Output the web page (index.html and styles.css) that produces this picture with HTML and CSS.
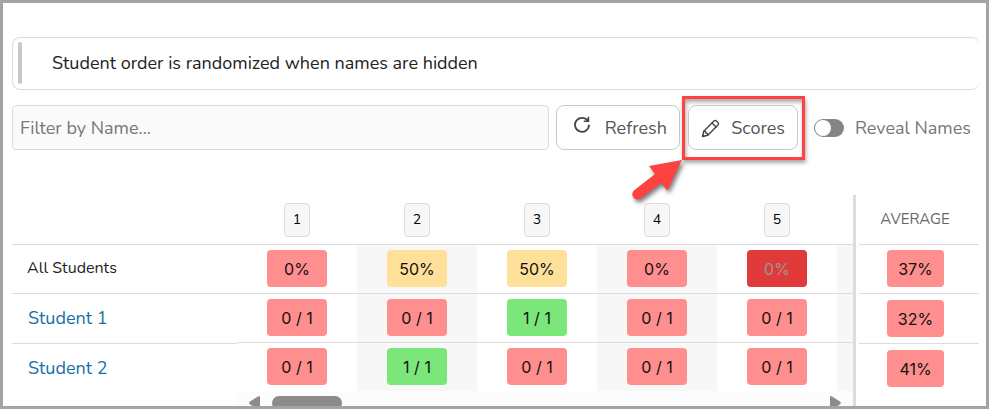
FILE: index.html
```html
<!DOCTYPE html>
<html lang="en">
<head>
<meta charset="utf-8">
<meta name="viewport" content="width=device-width, initial-scale=1">
<title>Student Scores</title>
<link rel="stylesheet" href="styles.css">
</head>
<body>
<main class="frame">
  <p class="notice">Student order is randomized when names are hidden</p>
  <div class="toolbar">
    <input class="filter" type="text" aria-label="Filter by Name" placeholder="Filter by Name...">
    <button class="btn refresh" type="button">
      <svg class="icon lifted" viewBox="0 0 20 20" width="20" height="20" aria-hidden="true"><path d="M15.6 5.6A7 7 0 1 0 17 9.800" fill="none" stroke="#444" stroke-width="1.800"/><path d="M17.200 1.800v5.200h-5.400V5.400h3.200l.8-3.600z" fill="#444"/></svg>
      Refresh
    </button>
    <div class="highlight">
      <button class="btn scores" type="button">
        <svg class="icon" viewBox="0 0 20 20" width="20" height="20" aria-hidden="true"><g fill="none" stroke="#444" stroke-width="1.400" stroke-linejoin="round" stroke-linecap="round"><path d="M1.500 18.500l1.300-5.300L12.900 3a1.900 1.900 0 0 1 2.600 0l1.500 1.500a1.900 1.900 0 0 1 0 2.600L6.800 17.200z"/><path d="M11 4.900l4.100 4.100M2.800 13.200l1.800.4.400 1.500 1.500.4.300 1.700M1.800 17.100l1.100 1.100"/></g></svg>
        Scores
      </button>
      <svg class="pointer" viewBox="0 0 60 50" width="60" height="50" aria-hidden="true"><path d="M52 5L19 11L25 19L4.500 35A4.900 4.900 0 0 0 10.500 43.500L31 28L37.500 35.500Z" fill="#fd4242"/></svg>
    </div>
    <label class="reveal"><input class="switch" type="checkbox">Reveal Names</label>
  </div>
  <section class="board">
    <table class="names">
      <thead><tr><th aria-label="Student"></th></tr></thead>
      <tbody>
        <tr><td class="all">All Students</td></tr>
        <tr><td><a href="#s1">Student 1</a></td></tr>
        <tr><td><a href="#s2">Student 2</a></td></tr>
      </tbody>
    </table>
    <div class="scroller">
      <table class="results">
        <thead><tr><th><span class="key">1</span></th><th><span class="key">2</span></th><th><span class="key">3</span></th><th><span class="key">4</span></th><th><span class="key">5</span></th><th></th></tr></thead>
        <tbody>
          <tr><td><span class="pill">0%</span></td><td><span class="pill mid">50%</span></td><td><span class="pill mid">50%</span></td><td><span class="pill">0%</span></td><td><span class="pill worst">0%</span></td><td></td></tr>
          <tr><td><span class="pill">0 / 1</span></td><td><span class="pill">0 / 1</span></td><td><span class="pill good">1 / 1</span></td><td><span class="pill">0 / 1</span></td><td><span class="pill">0 / 1</span></td><td></td></tr>
          <tr><td><span class="pill">0 / 1</span></td><td><span class="pill good">1 / 1</span></td><td><span class="pill">0 / 1</span></td><td><span class="pill">0 / 1</span></td><td><span class="pill">0 / 1</span></td><td></td></tr>
        </tbody>
      </table>
      <div class="track">
        <svg viewBox="0 0 11 14" width="11" height="14" aria-hidden="true"><path d="M11 0v14L1 8.500Q-.5 7 1 5.500L9 .5z" fill="#8b8b8b"/></svg>
        <span class="thumb"></span>
        <svg viewBox="0 0 11 14" width="11" height="14" aria-hidden="true"><path d="M0 0v14L10 8.500Q11.500 7 10 5.500L2 .5z" fill="#8b8b8b"/></svg>
      </div>
    </div>
    <table class="average">
      <thead><tr><th>AVERAGE</th></tr></thead>
      <tbody>
        <tr><td><span class="pill">37%</span></td></tr>
        <tr><td><span class="pill">32%</span></td></tr>
        <tr><td><span class="pill">41%</span></td></tr>
      </tbody>
    </table>
  </section>
</main>
</body>
</html>
```
FILE: styles.css
```css
* { box-sizing: border-box; }
body { margin: 0; background: #fff; color: #222; font: 18px/24px Nunito, Lato, sans-serif; }
button, input { font: inherit; }
.frame { height: 100vh; overflow: hidden; border: 3px solid #a3a3a3; padding: 34px 7px 0 9px; }

.notice { display: flex; align-items: center; height: 53px; margin: 0 0 15px; padding: 0 0 1px 5px; border: 1px solid #dcdcdc; border-right: 0; border-radius: 8px; }
.notice::before { content: ""; width: 4px; height: 42px; margin-right: 30px; border-radius: 2px; background: #c8c8c8; }

.toolbar { display: flex; align-items: center; height: 45px; margin-bottom: 45px; }
.filter { flex: 1; min-width: 0; height: 45px; margin-right: 7px; padding: 0 7px; border: 1px solid #dcdcdc; border-radius: 4px; background: #fafafa; color: #222; }
.filter::placeholder { color: #777; opacity: 1; }
.btn { display: flex; align-items: center; justify-content: space-between; height: 45px; padding: 1px 12px 0; border: 1px solid #c8c8c8; border-radius: 8px; background: #fff; color: #555; }
.refresh { width: 124px; padding-left: 15px; margin-right: 2px; }
.scores { width: 110px; }
.lifted { margin-bottom: 6px; }
.highlight { position: relative; padding: 6px 4px 7px 3px; border: 3px solid #fd4242; box-shadow: 1px 3px 4px rgba(0,0,0,.35), inset 1px 3px 4px rgba(0,0,0,.35); }
.pointer { position: absolute; left: -55px; top: 56px; overflow: visible; filter: drop-shadow(2px 3px 2px rgba(0,0,0,.5)); }
.reveal { display: flex; align-items: center; gap: 11px; margin: 0 8px 0 9px; color: #777; white-space: nowrap; }
.switch { appearance: none; display: flex; align-items: center; width: 30px; height: 18px; margin: 0; padding: 1px; border-radius: 9px; background: #858585; }
.switch::before { content: ""; width: 16px; height: 16px; border-radius: 50%; background: #fff; }
.switch:checked { justify-content: flex-end; }

.board { display: grid; grid-template-columns: 225px minmax(0, 1fr) 120px; align-items: start; }
table { border-collapse: separate; border-spacing: 0; table-layout: fixed; width: 100%; }
th { height: 49px; padding: 0; font-weight: 400; }
td { height: 49px; padding: 0 0 1px; border-top: 1px solid #dcdcdc; }
.names tr + tr td, .average tr + tr td { height: 50px; }
.names td { padding: 0 0 2px 16px; }
.names .all { padding-left: 15px; font-size: 16px; }
.names a { color: #1670a8; text-decoration: none; }

.scroller { overflow: hidden; border-right: 3px solid #dcdcdc; margin-right: 3px; }
.results { width: 720px; }
.results td:nth-child(even) { background: #f7f7f7; }
.key { display: block; width: 26px; height: 34px; margin: 0 auto; border: 1px solid #dcdcdc; border-radius: 4px; background: #f7f7f7; font-size: 14px; line-height: 32px; color: #000; }
.pill { display: block; width: 60px; height: 37px; margin: 0 auto; border-radius: 4px; background: #ff8e8e; color: #111; font-family: Inter, sans-serif; font-size: 16px; line-height: 38px; text-align: center; }
.mid { background: #ffe099; }
.good { background: #7be77b; }
.worst { background: #e03a3a; color: #999; }
.track { display: flex; align-items: center; gap: 12px; height: 24px; padding: 0 12px; background: #fcfcfc; }
.thumb { width: 70px; height: 14px; margin-right: auto; border-radius: 7px; background: #8b8b8b; }
.average th { padding-right: 8px; padding-bottom: 1px; font-size: 15px; color: #666; }
.average td { padding-right: 7px; }
.average .pill { width: 57px; }
```
